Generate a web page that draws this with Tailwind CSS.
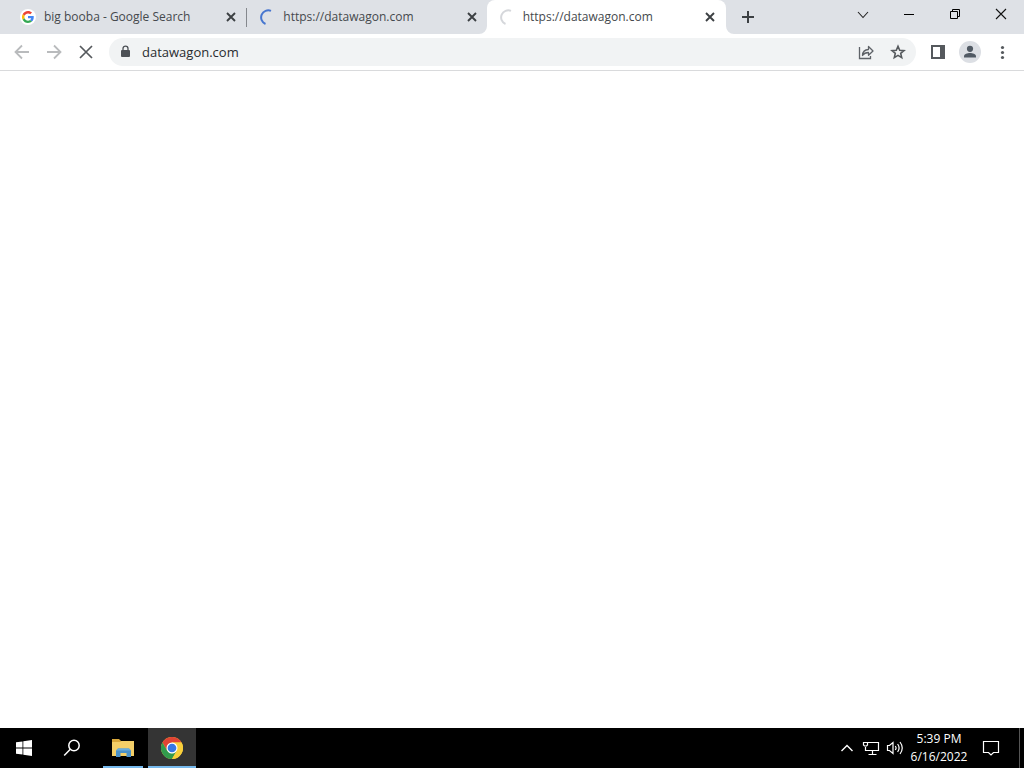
<!DOCTYPE html>
<html lang="en">
<head>
<meta charset="utf-8">
<meta name="viewport" content="width=device-width, initial-scale=1">
<title>datawagon.com</title>
<script src="https://cdn.jsdelivr.net/npm/@tailwindcss/browser@4"></script>
</head>
<body class="flex h-screen flex-col overflow-hidden bg-white font-['Open_Sans','Noto_Sans',sans-serif] text-xs text-[#45494d]">
<header class="shrink-0">
  <!-- Tab strip -->
  <div class="flex h-[34px] bg-[#dee1e6] pl-2">
    <nav class="flex min-w-0 max-w-[718px] flex-1" aria-label="Tabs">
      <div class="flex min-w-0 flex-1 items-center pl-3">
        <span class="grid size-4 shrink-0 place-items-center rounded-full bg-white">
          <svg class="size-3" viewBox="0 0 48 48"><path fill="#ea4335" d="M24 9.500c3.500 0 6.700 1.200 9.200 3.600l6.900-6.900C35.900 2.400 30.500 0 24 0 14.600 0 6.500 5.400 2.600 13.200l8 6.200C12.400 13.700 17.700 9.500 24 9.500z"/><path fill="#4285f4" d="M47 24.500c0-1.600-.2-3.100-.4-4.500H24v9h12.900c-.6 3-2.300 5.500-4.800 7.200l7.700 6C44.400 38 47 31.800 47 24.500z"/><path fill="#fbbc05" d="M10.500 28.600a14.500 14.500 0 0 1 0-9.200l-8-6.200a24 24 0 0 0 0 21.600z"/><path fill="#34a853" d="M24 48c6.500 0 11.900-2.100 15.900-5.800l-7.700-6c-2.200 1.500-5 2.300-8.200 2.300-6.300 0-11.600-4.200-13.500-9.900l-8 6.200C6.500 42.600 14.600 48 24 48z"/></svg>
        </span>
        <a href="#" class="ml-2 min-w-0 flex-1 truncate">big booba - Google Search</a>
        <button class="mr-[7px] grid size-4 shrink-0 place-items-center" aria-label="Close tab"><svg class="size-4" viewBox="0 0 16 16" fill="none" stroke="#3c4043" stroke-width="1.900"><path d="M4 4l8 8M12 4l-8 8"/></svg></button>
        <span class="h-[19px] w-px bg-[#85888d]"></span>
      </div>
      <div class="flex min-w-0 flex-1 items-center bg-[#dee1e6] pl-3">
        <svg class="size-4 shrink-0" viewBox="0 0 16 16" fill="none" stroke="#4776cf" stroke-width="2"><path d="M12 1.900A7 7 0 0 0 6.500 15"/></svg>
        <a href="#" class="ml-2 min-w-0 flex-1 truncate">https://datawagon.com</a>
        <button class="mr-[7px] grid size-4 shrink-0 place-items-center" aria-label="Close tab"><svg class="size-4" viewBox="0 0 16 16" fill="none" stroke="#3c4043" stroke-width="1.900"><path d="M4 4l8 8M12 4l-8 8"/></svg></button>
      </div>
      <div class="relative flex min-w-0 flex-1 items-center rounded-t-lg bg-white pl-3">
        <svg class="absolute bottom-0 -left-2 size-2" viewBox="0 0 8 8" fill="#fff"><path d="M8 0v8H0a8 8 0 0 0 8-8z"/></svg>
        <svg class="absolute -right-2 bottom-0 size-2" viewBox="0 0 8 8" fill="#fff"><path d="M0 0v8h8a8 8 0 0 1-8-8z"/></svg>
        <svg class="size-4 shrink-0" viewBox="0 0 16 16" fill="none" stroke="#d5d7db" stroke-width="2"><path d="M12 1.900A7 7 0 0 0 6.500 15"/></svg>
        <a href="#" aria-current="page" class="ml-2 min-w-0 flex-1 truncate">https://datawagon.com</a>
        <button class="mr-2 grid size-4 shrink-0 place-items-center" aria-label="Close tab"><svg class="size-4" viewBox="0 0 16 16" fill="none" stroke="#3c4043" stroke-width="1.900"><path d="M4 4l8 8M12 4l-8 8"/></svg></button>
      </div>
    </nav>
    <button class="ml-2 grid w-7 shrink-0 place-items-center" aria-label="New tab"><svg class="size-4" viewBox="0 0 16 16" fill="none" stroke="#3c4043" stroke-width="2"><path d="M2 8h12M8 2v12"/></svg></button>
    <div class="ml-auto flex h-[29px] shrink-0">
      <button class="grid w-[46px] place-items-center" aria-label="Search tabs"><svg class="size-4" viewBox="0 0 16 16" fill="none" stroke="#222" stroke-width="1.100"><path d="M3 5l5 5.500L13 5"/></svg></button>
      <button class="grid w-[46px] place-items-center" aria-label="Minimize"><svg class="size-4" viewBox="0 0 16 16" stroke="#000"><path d="M3 7.500h10"/></svg></button>
      <button class="grid w-[46px] place-items-center" aria-label="Restore"><svg class="size-4" viewBox="0 0 16 16" fill="none" stroke="#000"><path d="M3.500 4.500h7v7h-7zM5.500 4.500v-2h7v7h-2"/></svg></button>
      <button class="grid w-[46px] place-items-center" aria-label="Close window"><svg class="size-4" viewBox="0 0 16 16" fill="none" stroke="#111" stroke-width="1.100"><path d="M3 2l10 10M13 2L3 12"/></svg></button>
    </div>
  </div>
  <!-- Toolbar -->
  <div class="flex h-[37px] items-center border-b border-[#d9dadc] pr-[10px] pl-[10px]">
    <div class="flex shrink-0 gap-2">
      <button class="grid size-6 place-items-center" aria-label="Back"><svg class="size-4" viewBox="0 0 16 16" fill="none" stroke="#b9bbbd" stroke-width="1.800"><path d="M15 8H2M8 1.500L1.500 8 8 14.500"/></svg></button>
      <button class="grid size-6 place-items-center" aria-label="Forward"><svg class="size-4" viewBox="0 0 16 16" fill="none" stroke="#b9bbbd" stroke-width="1.800"><path d="M1 8h13M8 1.500L14.500 8 8 14.500"/></svg></button>
      <button class="grid size-6 place-items-center" aria-label="Stop loading"><svg class="size-4" viewBox="0 0 16 16" fill="none" stroke="#55595d" stroke-width="1.700"><path d="M2 2l12 12M14 2L2 14"/></svg></button>
    </div>
    <div class="ml-[11px] flex h-7 min-w-0 flex-1 items-center rounded-full bg-[#f1f3f4] pr-[6px] pl-2">
      <svg class="size-4 shrink-0" viewBox="0 0 16 16"><rect x="4" y="6" width="9" height="7" rx="1" fill="#4d5156"/><path d="M6 6.500V4.600a2.500 2.500 0 0 1 5 0v1.900" fill="none" stroke="#4d5156" stroke-width="1.300"/></svg>
      <input aria-label="Address and search bar" value="datawagon.com" class="ml-[9px] min-w-0 flex-1 bg-transparent pt-px text-[13px] text-[#292c30] outline-none">
      <div class="flex gap-2">
        <button class="grid size-6 place-items-center" aria-label="Share"><svg class="size-4" viewBox="0 0 16 16" fill="none" stroke="#5f6368" stroke-width="1.300"><path d="M1.500 3v11.500h11V12"/><path d="M4.500 11.500C4.700 7.500 7 5.600 10.500 5.500V2.500L15 7l-4.500 4.300V8.500C8 8.500 6 9.300 4.500 11.500z" stroke-linejoin="round"/></svg></button>
        <button class="grid size-6 place-items-center" aria-label="Bookmark this tab"><svg class="size-4" viewBox="0 0 16 16" fill="none" stroke="#55595d" stroke-width="1.600"><path d="M8 2.200l1.700 4 4.300.4-3.300 2.800 1 4.200L8 11.400l-3.700 2.200 1-4.200L2 6.600l4.300-.4z"/></svg></button>
      </div>
    </div>
    <div class="ml-[10px] flex shrink-0 gap-2">
      <button class="grid size-6 place-items-center" aria-label="Side panel"><svg class="size-4" viewBox="0 0 16 16"><path fill="#55595d" fill-rule="evenodd" d="M1 1h14v14H1zM3 3v10h7V3z"/></svg></button>
      <button class="grid size-6 place-items-center" aria-label="Profile"><svg class="size-[22px]" viewBox="0 0 22 22"><circle cx="11" cy="11" r="11" fill="#dcdfe4"/><g fill="#515a64"><circle cx="11" cy="7.800" r="3.100"/><path d="M5 16.500v-1.300c0-2 3.500-3.200 6-3.200s6 1.200 6 3.200v1.300z"/></g></svg></button>
      <button class="grid size-6 place-items-center" aria-label="Chrome menu"><svg class="size-4" viewBox="0 0 16 16" fill="#55595d"><circle cx="8.500" cy="3.500" r="1.600"/><circle cx="8.500" cy="8.500" r="1.600"/><circle cx="8.500" cy="13.500" r="1.600"/></svg></button>
    </div>
  </div>
</header>
<main class="flex-1 bg-white"></main>
<!-- Taskbar -->
<footer class="flex h-10 shrink-0 bg-black text-white">
  <button class="grid w-12 place-items-center" aria-label="Start"><svg class="size-4" viewBox="0 0 16 16" fill="#fff"><path d="M0 2.300l6.500-.9v6.200H0zM7.300 1.300L16 0v7.600H7.300zM0 8.400h6.500v6.200L0 13.700zM7.300 8.400H16V16l-8.700-1.300z"/></svg></button>
  <button class="grid w-12 place-items-center" aria-label="Search"><svg class="size-[18px]" viewBox="0 0 18 18" fill="none" stroke="#fff" stroke-width="1.500"><circle cx="11" cy="6.500" r="5.200"/><path d="M7.300 10.200L1.200 16.500"/></svg></button>
  <button class="ml-[7px] flex w-10 flex-col items-center justify-end" aria-label="File Explorer">
    <svg class="mb-2 h-5 w-[22px]" viewBox="0 0 22 20"><path fill="#d9a83b" d="M0 1h7l2 2h13v15H0z"/><path fill="#f4cf68" d="M0 4h8l1.500-1H22v15H0z"/><path fill="#4a91c9" d="M4 19v-6.500L6 10.500h11l2 2V19h-4.500v-4h-6v4z"/><path fill="#6aaede" d="M4 12.500l2-2h11l2 2z"/></svg>
    <span class="h-[2px] w-full bg-[#76b9ed]"></span>
  </button>
  <button class="ml-[5px] flex w-12 flex-col items-center justify-end bg-[#343434]" aria-label="Google Chrome">
    <svg class="mb-[7px] size-[22px]" viewBox="0 0 48 48"><circle cx="24" cy="24" r="24" fill="#f9cf3b"/><path fill="#e14434" d="M3.200 12A24 24 0 0 1 44.800 12H24L13.600 30z"/><path fill="#319a4d" d="M3.200 12A24 24 0 0 0 24 48l10.400-18-10.400 6-10.400-6z"/><path fill="#f9cf3b" d="M24 12h20.800A24 24 0 0 1 24 48l10.400-18z"/><circle cx="24" cy="24" r="12" fill="#fff"/><circle cx="24" cy="24" r="9.500" fill="#3777e3"/></svg>
    <span class="h-[2px] w-full bg-[#76b9ed]"></span>
  </button>
  <div class="ml-auto flex">
    <button class="grid w-6 place-items-center" aria-label="Show hidden icons"><svg class="size-4" viewBox="0 0 16 16" fill="none" stroke="#fff" stroke-width="1.400"><path d="M2.500 11L8 5.500l5.500 5.500"/></svg></button>
    <button class="grid w-6 place-items-center" aria-label="Network"><svg class="h-4 w-[18px]" viewBox="0 0 18 16" fill="none" stroke="#fff" stroke-width="1.200"><path d="M5.500 2.500h11v8h-13V7M10.500 10.500v4M6.500 14.500h8M1.500 2.500h4v2.500l-1 1h-2l-1-1z"/></svg></button>
    <button class="grid w-6 place-items-center" aria-label="Volume"><svg class="h-4 w-[18px]" viewBox="0 0 18 16" fill="none" stroke="#fff" stroke-width="1.200"><path d="M1.500 5.500h2l3.500-3v11l-3.500-3h-2zM9.300 6q1.500 2 0 4M11.600 4q3 4 0 8M14 2q4.500 6 0 12"/></svg></button>
    <button class="w-16 text-center leading-[18px]" aria-label="Clock"><time class="block" datetime="2022-06-16T17:39"><span class="block">5:39 PM</span><span class="block">6/16/2022</span></time></button>
    <button class="grid w-10 place-items-center" aria-label="Notifications"><svg class="size-[18px]" viewBox="0 0 18 18" fill="none" stroke="#fff" stroke-width="1.200"><path d="M1.500 2.500h15v11h-5L9 16l-2.500-2.500h-5z"/></svg></button>
    <button class="ml-2 w-[5px] border-l border-[#555]" aria-label="Show desktop"></button>
  </div>
</footer>
</body>
</html>
